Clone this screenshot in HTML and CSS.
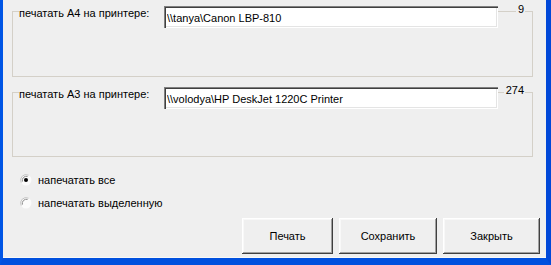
FILE: index.html
```html
<!doctype html>
<html>
  <head>
    <meta charset="utf-8">
    <title>Печать</title>
    <link rel="stylesheet" href="styles.css">
  </head>
  <body>
    <div class="window">
      <div class="group group-a4">
        <div class="group-head">
          <span class="group-label">печатать А4 на принтере:</span>
          <input class="field" type="text" value="\\tanya\Canon LBP-810" readonly>
          <span class="group-count">9</span>
        </div>
      </div>

      <div class="group group-a3">
        <div class="group-head">
          <span class="group-label">печатать А3 на принтере:</span>
          <input class="field" type="text" value="\\volodya\HP DeskJet 1220C Printer" readonly>
          <span class="group-count">274</span>
        </div>
      </div>

      <div class="choices">
        <label class="choice">
          <svg class="radio" width="12" height="12" viewBox="0 0 12 12">
            <circle cx="6" cy="6" r="5.5" fill="#fbfbfb"/>
            <path d="M1.2 8.6 A5.5 5.5 0 0 1 8.6 1.2" fill="none" stroke="#c4c4c4" stroke-width="1"/>
            <path d="M2.4 7.6 A4.2 4.2 0 0 1 7.6 2.4" fill="none" stroke="#8a8a8a" stroke-width="1"/>
            <circle cx="6" cy="6" r="2" fill="#000"/>
          </svg>
          <span>напечатать все</span>
        </label>
        <label class="choice">
          <svg class="radio" width="12" height="12" viewBox="0 0 12 12">
            <circle cx="6" cy="6" r="5.5" fill="#fbfbfb"/>
            <path d="M1.2 8.6 A5.5 5.5 0 0 1 8.6 1.2" fill="none" stroke="#c4c4c4" stroke-width="1"/>
            <path d="M2.4 7.6 A4.2 4.2 0 0 1 7.6 2.4" fill="none" stroke="#8a8a8a" stroke-width="1"/>
          </svg>
          <span>напечатать выделенную</span>
        </label>
      </div>

      <div class="buttons">
        <button class="btn btn-print">Печать</button>
        <button class="btn btn-save">Сохранить</button>
        <button class="btn btn-close">Закрыть</button>
      </div>
    </div>
  </body>
</html>
```

FILE: styles.css
```css
body {
  margin: 0;
  font-family: "Liberation Sans", Arial, sans-serif;
  font-size: 11px;
  color: #000;
}
.window {
  width: 551px;
  height: 265px;
  box-sizing: border-box;
  background: #efefef;
  border-left: 3px solid #0055e5;
  border-right: 5px solid #0048d8;
  border-bottom: 7px solid #0050de;
  padding-top: 11px;
  box-shadow: inset 0 -1px 0 #f8f8f8;
}
.group {
  box-sizing: border-box;
  width: 521px;
  margin-left: 9px;
  border: 1px solid #d4d0c8;
}
.group-a4 {
  height: 66px;
}
.group-a3 {
  height: 65px;
  margin-top: 15px;
}
.group-head {
  display: flex;
  align-items: flex-start;
  margin-top: -6px;
  padding-left: 6px;
}
.group-label {
  width: 145px;
  height: 15px;
  padding-top: 1px;
  line-height: 13px;
  background: #efefef;
}
.field {
  box-sizing: border-box;
  width: 334px;
  height: 22px;
  margin: 0;
  padding: 1px 3px 0;
  border: none;
  background: #fff;
  font-family: "Liberation Sans", Arial, sans-serif;
  font-size: 11px;
  color: #000;
  outline: none;
  box-shadow: inset 1px 1px 0 #808080, inset 2px 2px 0 #404040,
    inset -1px -1px 0 #ffffff, inset -2px -2px 0 #e4e4e4;
}
.group-count {
  margin-left: auto;
  margin-right: 7px;
  margin-top: -3px;
  padding-left: 2px;
  padding-right: 1px;
  line-height: 13px;
  background: #efefef;
}
.choices {
  display: flex;
  flex-direction: column;
  gap: 7px;
  margin-top: 15px;
  margin-left: 17px;
}
.choice {
  display: flex;
  align-items: center;
  gap: 6px;
  height: 16px;
}
.radio {
  flex: 0 0 12px;
}
.buttons {
  display: flex;
  justify-content: flex-end;
  gap: 6px;
  margin-top: 7px;
  margin-right: 6px;
}
.btn {
  height: 36px;
  margin: 0;
  padding: 0;
  border: none;
  background: #efefef;
  font-family: "Liberation Sans", Arial, sans-serif;
  font-size: 11px;
  color: #000;
  box-shadow: inset -1px -1px 0 #404040, inset 1px 1px 0 #ffffff,
    inset -2px -2px 0 #a0a0a0, inset 2px 2px 0 #f8f8f8;
}
.btn-print {
  width: 91px;
}
.btn-save {
  width: 98px;
}
.btn-close {
  width: 97px;
}
```
